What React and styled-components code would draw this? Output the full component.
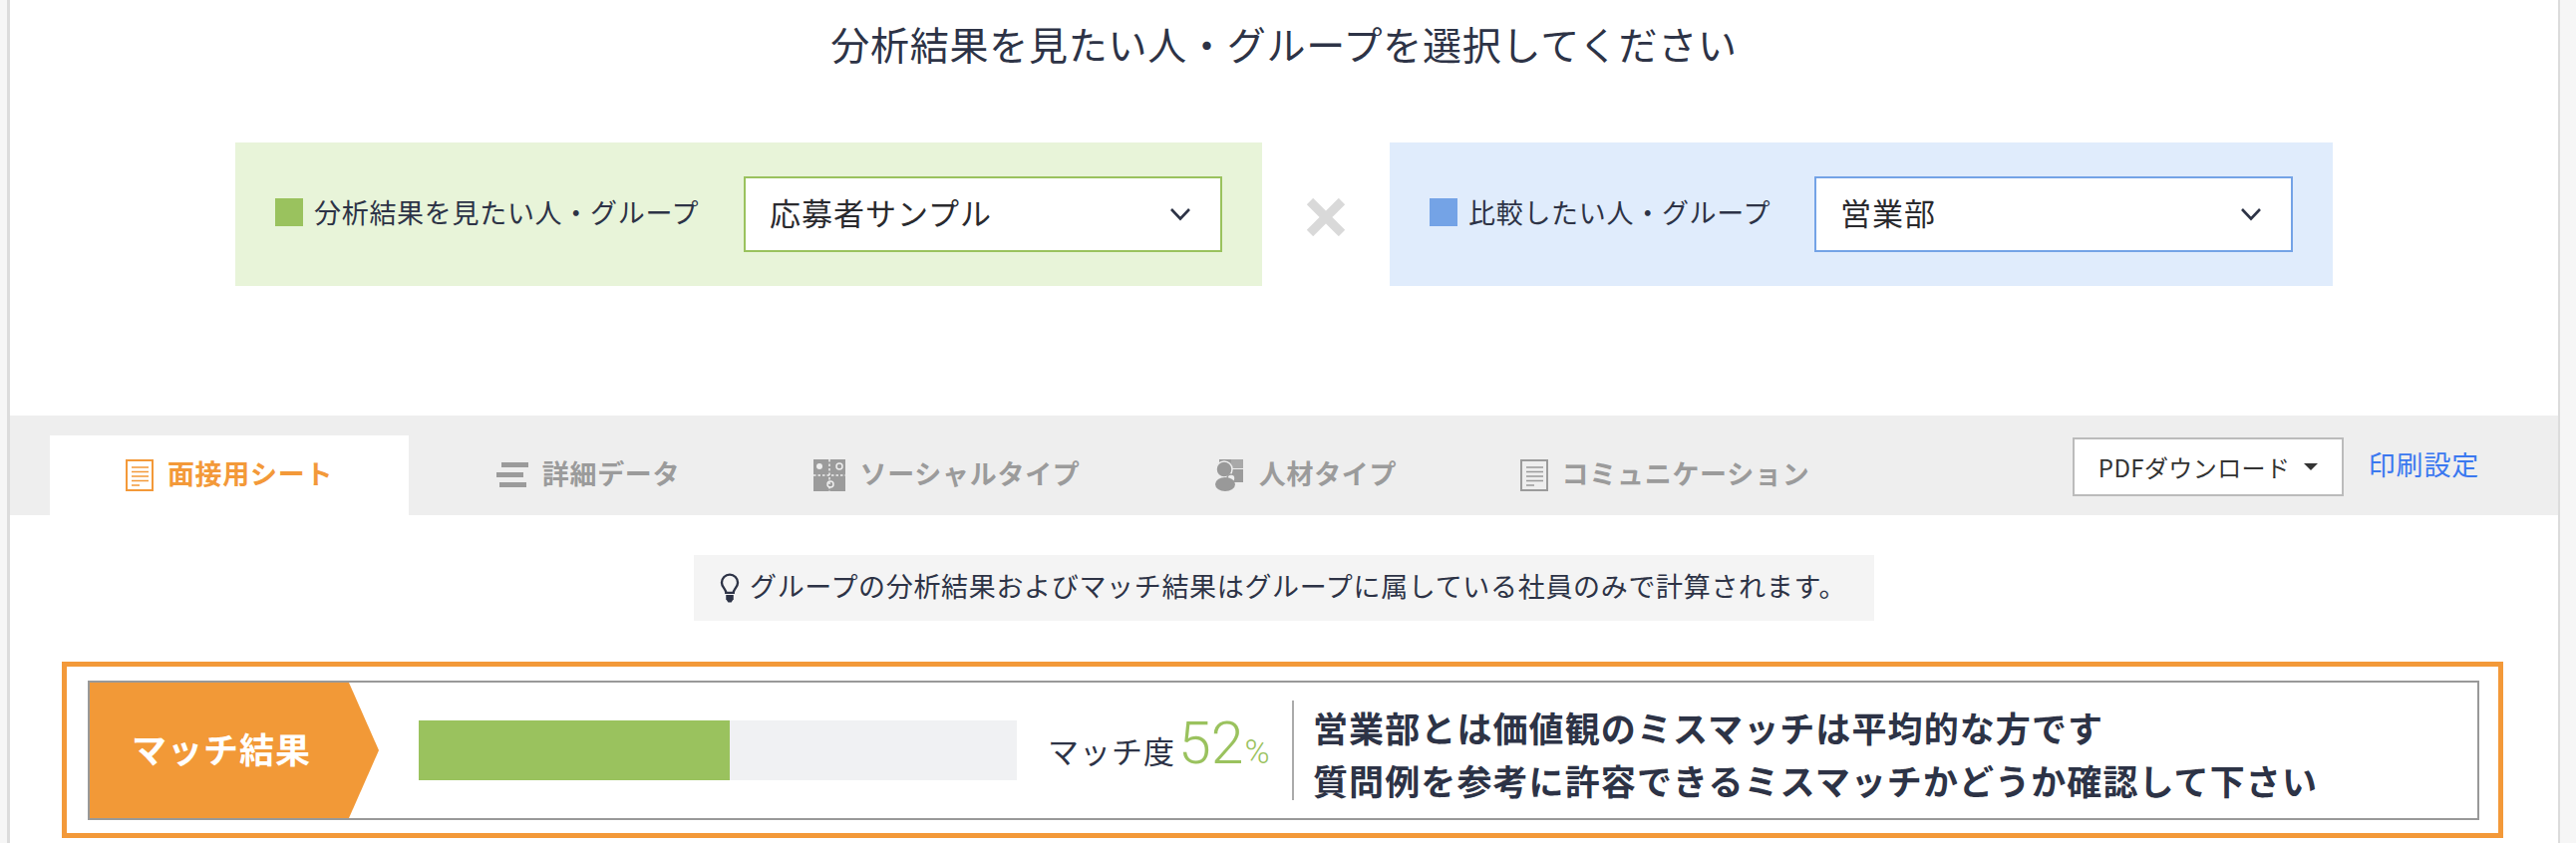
import React from "react";
import styled, { createGlobalStyle } from "styled-components";

const GlobalStyle = createGlobalStyle`
  body {
    margin: 0;
    background-color: #f6f6f6;
    color: #2d3346;
    font-family: "Noto Sans CJK JP", "Noto Sans", sans-serif;
    overflow: hidden;
  }
`;

const Page = styled.div`
  box-sizing: border-box;
  width: 2561px;
  height: 846px;
  margin-left: 7px;
  border-left: 3px solid #dcdcdc;
  border-right: 2px solid #dcdcdc;
  background-color: #fff;
  overflow: hidden;
`;

const Heading = styled.h1`
  margin: 0;
  height: 92px;
  font-size: 39px;
  font-weight: 400;
  line-height: 87px;
  letter-spacing: 0.75px;
  text-align: center;
`;

const Selectors = styled.div`
  display: flex;
  margin: 51px 0 0 226px;
`;

const Panel = styled.div`
  display: flex;
  align-items: center;
  box-sizing: border-box;
  width: ${(props) => props.$width}px;
  height: 144px;
  padding: 0 40px;
  background-color: ${(props) => props.$bg};
`;

const Swatch = styled.span`
  width: 28px;
  height: 28px;
  margin: -4px 11px 0 0;
  background-color: ${(props) => props.$color};
`;

const PanelLabel = styled.span`
  font-size: 27px;
  letter-spacing: 0.7px;
  margin-top: -6px;
`;

const Select = styled.div`
  display: flex;
  align-items: center;
  justify-content: space-between;
  box-sizing: border-box;
  width: 480px;
  height: 76px;
  margin-left: auto;
  padding: 0 29px 0 24px;
  border: 2px solid ${(props) => props.$color};
  background-color: #fff;
  font-size: 31px;
  letter-spacing: 1px;
  color: #2a2a2e;
`;

const SelectValue = styled.span`
  margin-top: -6px;
`;

const Cross = styled.div`
  display: flex;
  align-items: center;
  justify-content: center;
  width: 128px;
  padding-top: 6px;
`;

const TabBar = styled.div`
  display: flex;
  align-items: flex-end;
  height: 100px;
  margin-top: 130px;
  padding: 0 79px 0 40px;
  background-color: #eee;
`;

const Tab = styled.div`
  display: flex;
  align-items: center;
  justify-content: center;
  gap: 14px;
  width: 360px;
  height: 80px;
  background-color: ${(props) => (props.$active ? "#fff" : "transparent")};
  color: ${(props) => (props.$active ? "#f39939" : "#9b9b9b")};
  font-size: 27px;
  font-weight: 700;
  letter-spacing: 0.7px;
`;

const TabLabel = styled.span`
  margin-top: -5px;
`;

const Actions = styled.div`
  display: flex;
  align-items: center;
  align-self: flex-start;
  margin: 22px 0 0 auto;
`;

const PdfButton = styled.div`
  display: flex;
  align-items: center;
  box-sizing: border-box;
  width: 272px;
  height: 59px;
  padding-left: 24px;
  border: 2px solid #bbb;
  background-color: #fff;
  font-size: 24px;
  letter-spacing: 0.4px;
  color: #333;
`;

const Caret = styled.span`
  width: 0;
  height: 0;
  margin-left: 14px;
  border-left: 7px solid transparent;
  border-right: 7px solid transparent;
  border-top: 7px solid #333;
`;

const PrintLink = styled.a`
  margin: -6px 0 0 25px;
  font-size: 27px;
  letter-spacing: 0.8px;
  color: #3b78f0;
`;

const NoticeRow = styled.div`
  display: flex;
  justify-content: center;
  margin-top: 40px;
`;

const Notice = styled.div`
  display: flex;
  align-items: center;
  gap: 9px;
  box-sizing: border-box;
  width: 1184px;
  height: 66px;
  padding-left: 25px;
  background-color: #f4f4f4;
  font-size: 27px;
  letter-spacing: 0.67px;
`;

const NoticeText = styled.span`
  margin-top: -5px;
`;

const MatchFrame = styled.div`
  box-sizing: border-box;
  height: 177px;
  margin: 41px 55px 0 52px;
  padding: 14px 19px 14px 21px;
  border: 5px solid #f39939;
`;

const MatchInner = styled.div`
  display: flex;
  align-items: center;
  box-sizing: border-box;
  height: 140px;
  border: 2px solid #999;
`;

const MatchArrow = styled.div`
  display: flex;
  align-items: center;
  box-sizing: border-box;
  width: 290px;
  height: 100%;
  padding: 0 0 5px 42px;
  background-color: #f29937;
  clip-path: polygon(0 0, 260px 0, 100% 50%, 260px 100%, 0 100%);
  color: #fff;
  font-size: 35px;
  font-weight: 700;
  letter-spacing: 1px;
`;

const Bar = styled.div`
  width: 600px;
  height: 60px;
  margin-left: 40px;
  background-color: #f0f1f3;
`;

const BarFill = styled.div`
  width: ${(props) => props.$value}%;
  height: 100%;
  background-color: #9ac25e;
`;

const Score = styled.div`
  display: flex;
  align-items: baseline;
  box-sizing: border-box;
  width: 276px;
  margin-top: -16px;
  padding-left: 31px;
  font-size: 31px;
  letter-spacing: 1px;
`;

const ScoreValue = styled.span`
  margin-left: 3px;
  font-family: Roboto, sans-serif;
  font-size: 59px;
  font-weight: 300;
  letter-spacing: 0;
  color: #9ac25e;
`;

const ScorePercent = styled.span`
  margin-left: 1px;
  font-family: Roboto, sans-serif;
  font-size: 34px;
  font-weight: 300;
  letter-spacing: 0;
  color: #9ac25e;
`;

const Message = styled.div`
  box-sizing: border-box;
  height: 100px;
  padding-left: 19px;
  border-left: 2px solid #aaa;
  font-size: 35px;
  font-weight: 700;
  line-height: 53px;
  letter-spacing: 1.1px;
`;

const Chevron = () => (
  <svg width="22" height="14" viewBox="0 0 22 14" fill="none">
    <path d="M2 2l9 9.5L20 2" stroke="#2d3346" strokeWidth="2.6" />
  </svg>
);

const CrossIcon = () => (
  <svg width="40" height="38" viewBox="0 0 40 38" fill="none">
    <path d="M4 3l32 32M36 3L4 35" stroke="#d9d9d9" strokeWidth="9" />
  </svg>
);

const DocIcon = ({ color }) => (
  <svg width="28" height="32" viewBox="0 0 28 32" fill="none">
    <rect x="1" y="1" width="26" height="30" stroke={color} strokeWidth="2" />
    <path d="M6 8h17M6 12.500h17M6 17h17M6 21.500h17M6 26h8" stroke={color} strokeWidth="1.600" />
  </svg>
);

const BarsIcon = () => (
  <svg width="32" height="26" viewBox="0 0 32 26" fill="#9b9b9b">
    <rect x="5" y="0" width="27" height="5" />
    <rect x="0" y="10" width="27" height="5" />
    <rect x="3" y="20" width="27" height="5" />
  </svg>
);

const SocialIcon = () => (
  <svg width="32" height="32" viewBox="0 0 32 32">
    <rect width="32" height="32" fill="#9b9b9b" />
    <path d="M16 0v32M0 16h32" stroke="#eee" strokeWidth="1.500" strokeDasharray="2.500 2" />
    <circle cx="6" cy="7" r="3" fill="#eee" />
    <circle cx="26" cy="7" r="3" fill="none" stroke="#eee" strokeWidth="1.500" />
    <circle cx="17" cy="25" r="3" fill="none" stroke="#eee" strokeWidth="1.500" />
  </svg>
);

const PeopleIcon = () => (
  <svg width="30" height="32" viewBox="0 0 30 32">
    <rect x="4" y="0" width="12" height="9" fill="#9b9b9b" />
    <rect x="16" y="0" width="12" height="9" fill="#a9a9a9" />
    <rect x="17" y="10" width="11" height="13" fill="#9b9b9b" />
    <circle cx="9" cy="10" r="8" fill="#999" stroke="#eee" strokeWidth="1.500" />
    <circle cx="16" cy="19" r="4" fill="#eee" stroke="#9b9b9b" strokeWidth="1.500" />
    <ellipse cx="10" cy="25" rx="10" ry="7" fill="#999" />
  </svg>
);

const BulbIcon = () => (
  <svg width="22" height="30" viewBox="0 0 19 28" fill="none">
    <path d="M6 18.500C6 15 2 13.500 2 9a7.500 7.500 0 0 1 15 0c0 4.500-4 6-4 9.500z" stroke="#2d3346" strokeWidth="2.200" />
    <path d="M6 20.500h7v4l-2 3H8l-2-3z" fill="#2d3346" />
  </svg>
);

const tabs = [
  { label: "面接用シート", icon: <DocIcon color="#f39939" />, active: true },
  { label: "詳細データ", icon: <BarsIcon /> },
  { label: "ソーシャルタイプ", icon: <SocialIcon /> },
  { label: "人材タイプ", icon: <PeopleIcon /> },
  { label: "コミュニケーション", icon: <DocIcon color="#9b9b9b" /> },
];

export default function App() {
  return (
    <Page>
      <GlobalStyle />
      <Heading>分析結果を見たい人・グループを選択してください</Heading>

      <Selectors>
        <Panel $width={1030} $bg="#e8f4d9">
          <Swatch $color="#9ac25e" />
          <PanelLabel>分析結果を見たい人・グループ</PanelLabel>
          <Select $color="#9ac25e">
            <SelectValue>応募者サンプル</SelectValue>
            <Chevron />
          </Select>
        </Panel>
        <Cross>
          <CrossIcon />
        </Cross>
        <Panel $width={946} $bg="#e0ecfc">
          <Swatch $color="#74a3e6" />
          <PanelLabel>比較したい人・グループ</PanelLabel>
          <Select $color="#74a3e6">
            <SelectValue>営業部</SelectValue>
            <Chevron />
          </Select>
        </Panel>
      </Selectors>

      <TabBar>
        {tabs.map((tab) => (
          <Tab key={tab.label} $active={tab.active}>
            {tab.icon}
            <TabLabel>{tab.label}</TabLabel>
          </Tab>
        ))}
        <Actions>
          <PdfButton>
            PDFダウンロード
            <Caret />
          </PdfButton>
          <PrintLink>印刷設定</PrintLink>
        </Actions>
      </TabBar>

      <NoticeRow>
        <Notice>
          <BulbIcon />
          <NoticeText>グループの分析結果およびマッチ結果はグループに属している社員のみで計算されます。</NoticeText>
        </Notice>
      </NoticeRow>

      <MatchFrame>
        <MatchInner>
          <MatchArrow>マッチ結果</MatchArrow>
          <Bar>
            <BarFill $value={52} />
          </Bar>
          <Score>
            マッチ度
            <ScoreValue>52</ScoreValue>
            <ScorePercent>%</ScorePercent>
          </Score>
          <Message>
            営業部とは価値観のミスマッチは平均的な方です
            <br />
            質問例を参考に許容できるミスマッチかどうか確認して下さい
          </Message>
        </MatchInner>
      </MatchFrame>
    </Page>
  );
}
